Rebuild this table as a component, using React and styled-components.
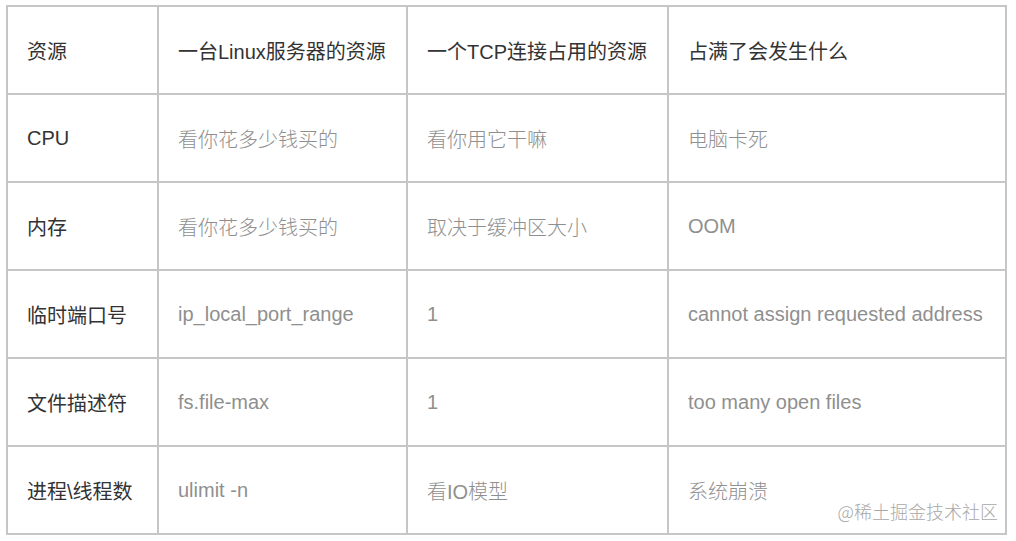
import React from "react";
import styled, { createGlobalStyle } from "styled-components";

const GlobalStyle = createGlobalStyle`
  body {
    margin: 0;
    background: #fff;
    font-family: "Liberation Sans", "Noto Sans CJK SC", sans-serif;
  }
`;

const rows = [
  ["资源", "一台Linux服务器的资源", "一个TCP连接占用的资源", "占满了会发生什么"],
  ["CPU", "看你花多少钱买的", "看你用它干嘛", "电脑卡死"],
  ["内存", "看你花多少钱买的", "取决于缓冲区大小", "OOM"],
  ["临时端口号", "ip_local_port_range", "1", "cannot assign requested address"],
  ["文件描述符", "fs.file-max", "1", "too many open files"],
  ["进程\\线程数", "ulimit -n", "看IO模型", "系统崩溃"],
];

const App = () => {
  return (
    <React.Fragment>
      <GlobalStyle />
      <Page>
        <Grid>
          {rows.map((row, i) =>
            row.map((text, j) => (
              <Cell key={i + "-" + j} $muted={i > 0 && j > 0}>
                {text}
              </Cell>
            ))
          )}
        </Grid>
        <Watermark>@稀土掘金技术社区</Watermark>
      </Page>
    </React.Fragment>
  );
};

const Page = styled.div`
  position: relative;
  padding: 5px 0 0 6px;
  width: 1016px;
  height: 541px;
  box-sizing: border-box;
`;

const Grid = styled.div`
  display: grid;
  grid-template-columns: 149px 247px 259px 336px;
  grid-auto-rows: 86px;
  gap: 2px;
  padding: 2px;
  width: max-content;
  background: #c6c6c6;
`;

const Cell = styled.div`
  display: flex;
  align-items: center;
  padding: 0 19px;
  background: #fff;
  font-size: 20px;
  white-space: nowrap;
  font-weight: ${(p) => (p.$muted ? 300 : 400)};
  color: ${(p) => (p.$muted ? "#8f8f8f" : "#333")};
`;

// watermark sits over the last cell
const Watermark = styled.div`
  position: absolute;
  right: 18px;
  bottom: 17px;
  font-size: 18px;
  color: #a8a8a8;
  font-family: "Noto Sans CJK SC", sans-serif;
  font-weight: 300;
`;

export default App;
